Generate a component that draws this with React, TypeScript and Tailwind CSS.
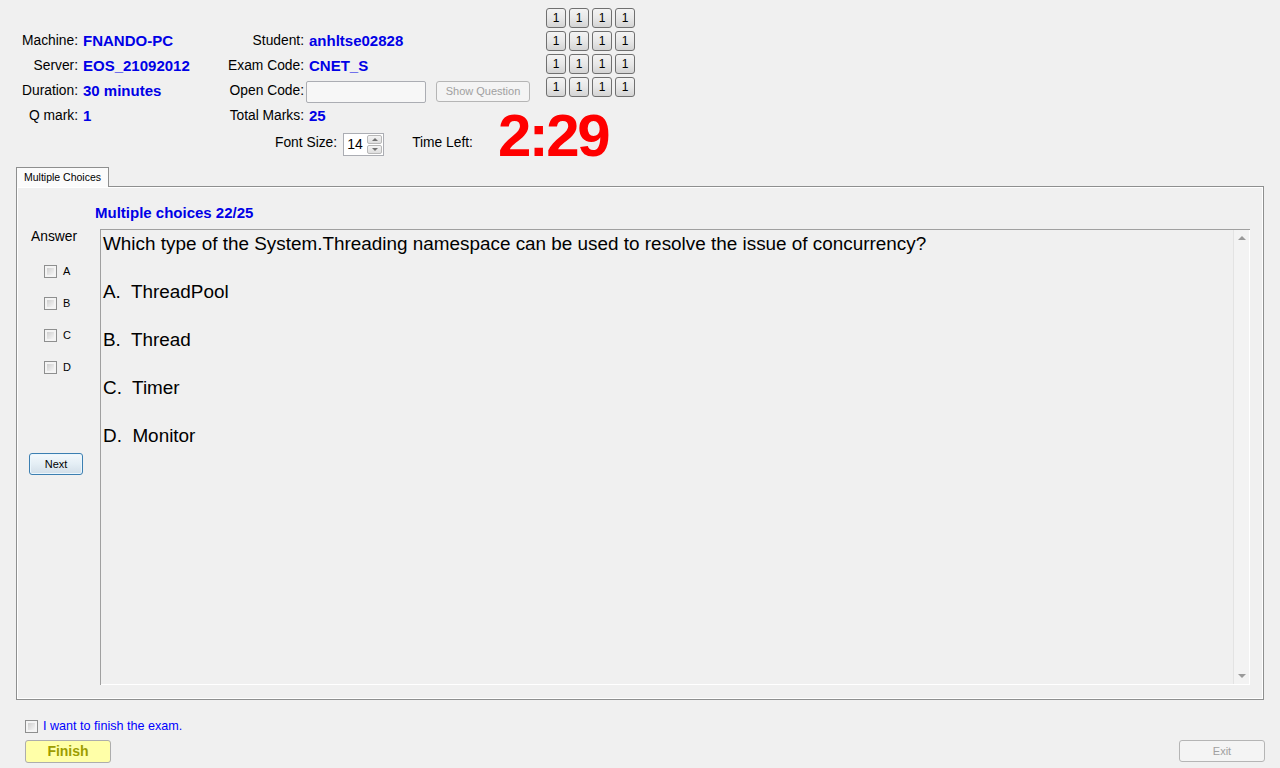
import React from "react";

const Check = () => (
  <div className="w-[13px] h-[13px] shrink-0 border border-[#8e8f8f] bg-[#f4f4f4] p-[2px]">
    <div className="w-full h-full bg-linear-to-br from-[#cfcfcf] to-[#f6f6f6]" />
  </div>
);

const GridBtn = () => (
  <div className="w-[20px] h-[20px] rounded-[3px] border border-[#707070] bg-linear-to-b from-[#f3f3f3] via-[#e8e8e8] to-[#d4d4d4] flex items-center justify-center text-[12px] text-black leading-none">
    1
  </div>
);

export default function App() {
  const label = "text-right text-black whitespace-nowrap";
  const val = "pl-[5px] font-bold text-[15px] text-[#0000e6] whitespace-nowrap";
  return (
    <div className="w-[1280px] h-[768px] bg-[#f0f0f0] font-['Liberation_Sans',Arial,sans-serif] text-black overflow-hidden">
      {/* header */}
      <div className="flex h-[167px]">
        <div className="w-[546px] shrink-0 pt-[29px] flex flex-col">
          <div className="grid grid-cols-[78px_148px_78px_1fr] grid-rows-[repeat(4,25px)] items-center text-[13.8px]">
            <span className={label}>Machine:</span>
            <span className={val}>FNANDO-PC</span>
            <span className={label}>Student:</span>
            <span className={val}>anhltse02828</span>

            <span className={label}>Server:</span>
            <span className={val}>EOS_21092012</span>
            <span className={label}>Exam Code:</span>
            <span className={val}>CNET_S</span>

            <span className={label}>Duration:</span>
            <span className={val}>30 minutes</span>
            <span className={label}>Open Code:</span>
            <div className="pl-[2px] flex items-center">
              <div className="w-[120px] h-[22px] border border-[#abadb3] bg-[#f7f7f7] rounded-[2px]" />
              <div className="ml-[10px] w-[94px] h-[21px] border border-[#b5b5b5] rounded-[3px] bg-[#f4f4f4] flex items-center justify-center text-[11px] text-[#a0a0a0] whitespace-nowrap">
                Show Question
              </div>
            </div>

            <span className={label}>Q mark:</span>
            <span className={val}>1</span>
            <span className={label}>Total Marks:</span>
            <span className={val}>25</span>
          </div>
          <div className="flex items-center h-[28px] pl-[275px] text-[13.8px] whitespace-nowrap">
            <span className="shrink-0">Font Size:</span>
            <div className="shrink-0 self-start mt-[4px] ml-[6px] w-[41px] h-[23px] border border-[#abadb3] bg-white flex">
              <span className="flex-1 pl-[3px] text-[14px] leading-[21px]">14</span>
              <div className="w-[15px] flex flex-col my-[1px] mr-[1px] gap-[1px]">
                <div className="flex-1 border border-[#b8b8b8] rounded-[2px] bg-linear-to-b from-[#f4f4f4] to-[#dedede] flex items-center justify-center">
                  <div className="w-0 h-0 border-l-[3px] border-r-[3px] border-b-[3px] border-l-transparent border-r-transparent border-b-[#707070]" />
                </div>
                <div className="flex-1 border border-[#b8b8b8] rounded-[2px] bg-linear-to-b from-[#f4f4f4] to-[#dedede] flex items-center justify-center">
                  <div className="w-0 h-0 border-l-[3px] border-r-[3px] border-t-[3px] border-l-transparent border-r-transparent border-t-[#707070]" />
                </div>
              </div>
            </div>
            <span className="shrink-0 ml-[28px]">Time Left:</span>
            <span className="shrink-0 ml-[25px] mb-[15px] text-[60px] font-bold text-[#ff0000] leading-[28px] tracking-[-2.5px]">
              2:29
            </span>
          </div>
        </div>
        <div className="pt-[8px]">
          <div className="grid grid-cols-[repeat(4,20px)] gap-[3px]">
            {Array.from({ length: 16 }).map((_, i) => (
              <GridBtn key={i} />
            ))}
          </div>
        </div>
      </div>

      {/* tab control */}
      <div className="pl-[16px]">
        <div className="relative z-10 -mb-px w-[93px] h-[20px] border border-b-0 border-[#8e8f8f] bg-[#fbfbfb] pl-[7px] text-[10.5px] leading-[19px] whitespace-nowrap">
          Multiple Choices
        </div>
        <div className="w-[1248px] h-[514px] border border-[#8e8f8f] shadow-[inset_1px_1px_0_#ffffff,inset_-1px_-1px_0_#ffffff] flex flex-col pt-[17px] pb-[14px]">
          <div className="pl-[78px] h-[18px] leading-[18px] text-[15px] font-bold text-[#0000e6]">
            Multiple choices 22/25
          </div>
          <div className="mt-[7px] flex flex-1">
            <div className="w-[83px] shrink-0 flex flex-col">
              <span className="pl-[14px] text-[13.8px] leading-[16px]">Answer</span>
              <div className="mt-[10px] flex flex-col">
                {["A", "B", "C", "D"].map((l) => (
                  <div key={l} className="h-[32px] flex items-center pl-[27px] gap-[6px]">
                    <Check />
                    <span className="text-[11px]">{l}</span>
                  </div>
                ))}
              </div>
              <div className="mt-[70px] ml-[12px] w-[54px] h-[22px] rounded-[3px] border border-[#3c7fb1] bg-linear-to-b from-[#f4f9fc] via-[#e4eef5] to-[#d2dee8] shadow-[inset_0_0_0_1px_#eaf6fd] flex items-center justify-center text-[11px]">
                Next
              </div>
            </div>
            <div className="mr-[13px] flex-1 h-[456px] border-t border-l border-[#a0a0a0] shadow-[inset_-1px_-1px_0_#ffffff] flex">
              <div className="flex-1 pt-[2px] pl-[2px] text-[18.9px] leading-[24px] whitespace-pre">
                <div className="mb-[24px]">Which type of the System.Threading namespace can be used to resolve the issue of concurrency?</div>
                <div className="mb-[24px]">A.  ThreadPool</div>
                <div className="mb-[24px]">B.  Thread</div>
                <div className="mb-[24px]">C.  Timer</div>
                <div>D.  Monitor</div>
              </div>
              <div className="w-[16px] mb-[1px] mr-[1px] border-l border-[#e3e3e3] bg-[#f3f3f3] flex flex-col justify-between items-center py-[6px]">
                <div className="w-0 h-0 border-l-[4px] border-r-[4px] border-b-[4px] border-l-transparent border-r-transparent border-b-[#9a9a9a]" />
                <div className="w-0 h-0 border-l-[4px] border-r-[4px] border-t-[4px] border-l-transparent border-r-transparent border-t-[#9a9a9a]" />
              </div>
            </div>
          </div>
        </div>
      </div>

      {/* bottom */}
      <div className="pt-[18px] pl-[25px] pr-[15px]">
        <div className="h-[16px] flex items-center gap-[5px]">
          <Check />
          <span className="text-[12.6px] text-[#0000ff]">I want to finish the exam.</span>
        </div>
        <div className="mt-[6px] flex justify-between">
          <div className="w-[86px] h-[23px] rounded-[3px] border border-[#adadad] bg-[#ffffa8] flex items-center justify-center text-[14px] font-bold text-[#9d9d00]">
            Finish
          </div>
          <div className="w-[86px] h-[22px] rounded-[3px] border border-[#b5b5b5] bg-[#f4f4f4] flex items-center justify-center text-[11px] text-[#a0a0a0]">
            Exit
          </div>
        </div>
      </div>
    </div>
  );
}
